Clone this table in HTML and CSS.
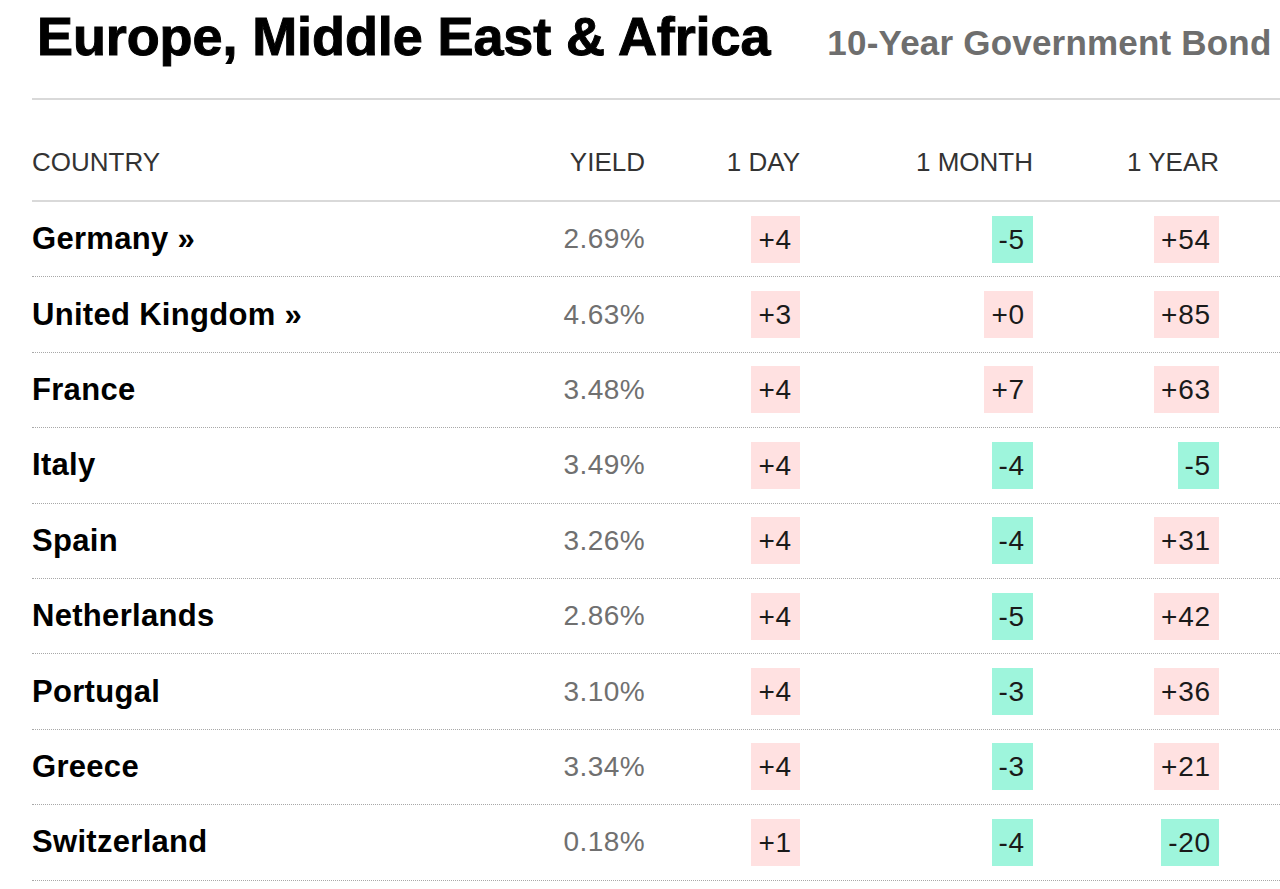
FILE: index.html
```html
<!DOCTYPE html>
<html lang="en">
<head>
<meta charset="utf-8">
<title>Europe, Middle East &amp; Africa — 10-Year Government Bond</title>
<link rel="stylesheet" href="styles.css">
</head>
<body>
<div class="page">
  <header class="titlebar">
    <h1 class="title">Europe, Middle East &amp; Africa</h1>
    <h2 class="subtitle">10-Year Government Bond</h2>
  </header>
  <div class="table">
    <div class="row head">
      <div class="cell country">COUNTRY</div>
      <div class="cell num">YIELD</div>
      <div class="cell num">1 DAY</div>
      <div class="cell num">1 MONTH</div>
      <div class="cell num">1 YEAR</div>
      <div class="cell"></div>
    </div>
    <div class="row">
      <div class="cell country">Germany <span class="more">»</span></div>
      <div class="cell num yield">2.69%</div>
      <div class="cell num"><span class="chg up">+4</span></div>
      <div class="cell num"><span class="chg down">-5</span></div>
      <div class="cell num"><span class="chg up">+54</span></div>
      <div class="cell"></div>
    </div>
    <div class="row">
      <div class="cell country">United Kingdom <span class="more">»</span></div>
      <div class="cell num yield">4.63%</div>
      <div class="cell num"><span class="chg up">+3</span></div>
      <div class="cell num"><span class="chg up">+0</span></div>
      <div class="cell num"><span class="chg up">+85</span></div>
      <div class="cell"></div>
    </div>
    <div class="row">
      <div class="cell country">France</div>
      <div class="cell num yield">3.48%</div>
      <div class="cell num"><span class="chg up">+4</span></div>
      <div class="cell num"><span class="chg up">+7</span></div>
      <div class="cell num"><span class="chg up">+63</span></div>
      <div class="cell"></div>
    </div>
    <div class="row">
      <div class="cell country">Italy</div>
      <div class="cell num yield">3.49%</div>
      <div class="cell num"><span class="chg up">+4</span></div>
      <div class="cell num"><span class="chg down">-4</span></div>
      <div class="cell num"><span class="chg down">-5</span></div>
      <div class="cell"></div>
    </div>
    <div class="row">
      <div class="cell country">Spain</div>
      <div class="cell num yield">3.26%</div>
      <div class="cell num"><span class="chg up">+4</span></div>
      <div class="cell num"><span class="chg down">-4</span></div>
      <div class="cell num"><span class="chg up">+31</span></div>
      <div class="cell"></div>
    </div>
    <div class="row">
      <div class="cell country">Netherlands</div>
      <div class="cell num yield">2.86%</div>
      <div class="cell num"><span class="chg up">+4</span></div>
      <div class="cell num"><span class="chg down">-5</span></div>
      <div class="cell num"><span class="chg up">+42</span></div>
      <div class="cell"></div>
    </div>
    <div class="row">
      <div class="cell country">Portugal</div>
      <div class="cell num yield">3.10%</div>
      <div class="cell num"><span class="chg up">+4</span></div>
      <div class="cell num"><span class="chg down">-3</span></div>
      <div class="cell num"><span class="chg up">+36</span></div>
      <div class="cell"></div>
    </div>
    <div class="row">
      <div class="cell country">Greece</div>
      <div class="cell num yield">3.34%</div>
      <div class="cell num"><span class="chg up">+4</span></div>
      <div class="cell num"><span class="chg down">-3</span></div>
      <div class="cell num"><span class="chg up">+21</span></div>
      <div class="cell"></div>
    </div>
    <div class="row">
      <div class="cell country">Switzerland</div>
      <div class="cell num yield">0.18%</div>
      <div class="cell num"><span class="chg up">+1</span></div>
      <div class="cell num"><span class="chg down">-4</span></div>
      <div class="cell num"><span class="chg down">-20</span></div>
      <div class="cell"></div>
    </div>
  </div>
</div>
</body>
</html>
```

FILE: styles.css
```css
* { box-sizing: border-box; }

html, body {
  margin: 0;
  padding: 0;
  background: #ffffff;
}

body {
  font-family: "Liberation Sans", Arial, Helvetica, sans-serif;
  color: #000;
  overflow: hidden;
}

.page {
  padding-left: 32px;
  width: 1280px;
}

.titlebar {
  display: flex;
  align-items: baseline;
  height: 100px;
  border-bottom: 2px solid #d9d9d9;
}

.title {
  margin: 0 0 0 5px;
  font-size: 54px;
  line-height: 72px;
  font-weight: 700;
  letter-spacing: -0.1px;
  color: #000;
  -webkit-text-stroke: 1px #000;
  white-space: nowrap;
}

.subtitle {
  margin: 0 0 0 57px;
  font-size: 35px;
  line-height: 72px;
  font-weight: 700;
  letter-spacing: 0.2px;
  color: #6e6e6e;
  white-space: nowrap;
}

.table {
  display: flex;
  flex-direction: column;
}

.row {
  display: grid;
  grid-template-columns: 460px 153px 155px 233px 186px 61px;
  align-items: center;
  height: 75.4px;
  border-bottom: 1px dotted #a8a8a8;
}

.row.head {
  height: 102px;
  padding-top: 24px;
  border-bottom: 2px solid #d9d9d9;
  font-size: 26px;
  color: #333333;
  letter-spacing: 0;
}

.cell {
  white-space: nowrap;
}

.num {
  text-align: right;
}

.country {
  font-size: 31px;
  font-weight: 700;
  letter-spacing: 0.3px;
}

.head .country {
  font-size: 26px;
  font-weight: 400;
  letter-spacing: 0;
}

.more {
  font-weight: 700;
}

.yield {
  font-size: 28px;
  color: #707070;
  letter-spacing: 0.4px;
}

.chg {
  display: inline-block;
  height: 47px;
  line-height: 47px;
  padding: 0 8px 0 7px;
  font-size: 28px;
  letter-spacing: 0.8px;
  color: #1a1a1a;
}

.chg.up {
  background: #ffe1e1;
}

.chg.down {
  background: #9ef5dc;
}
```
